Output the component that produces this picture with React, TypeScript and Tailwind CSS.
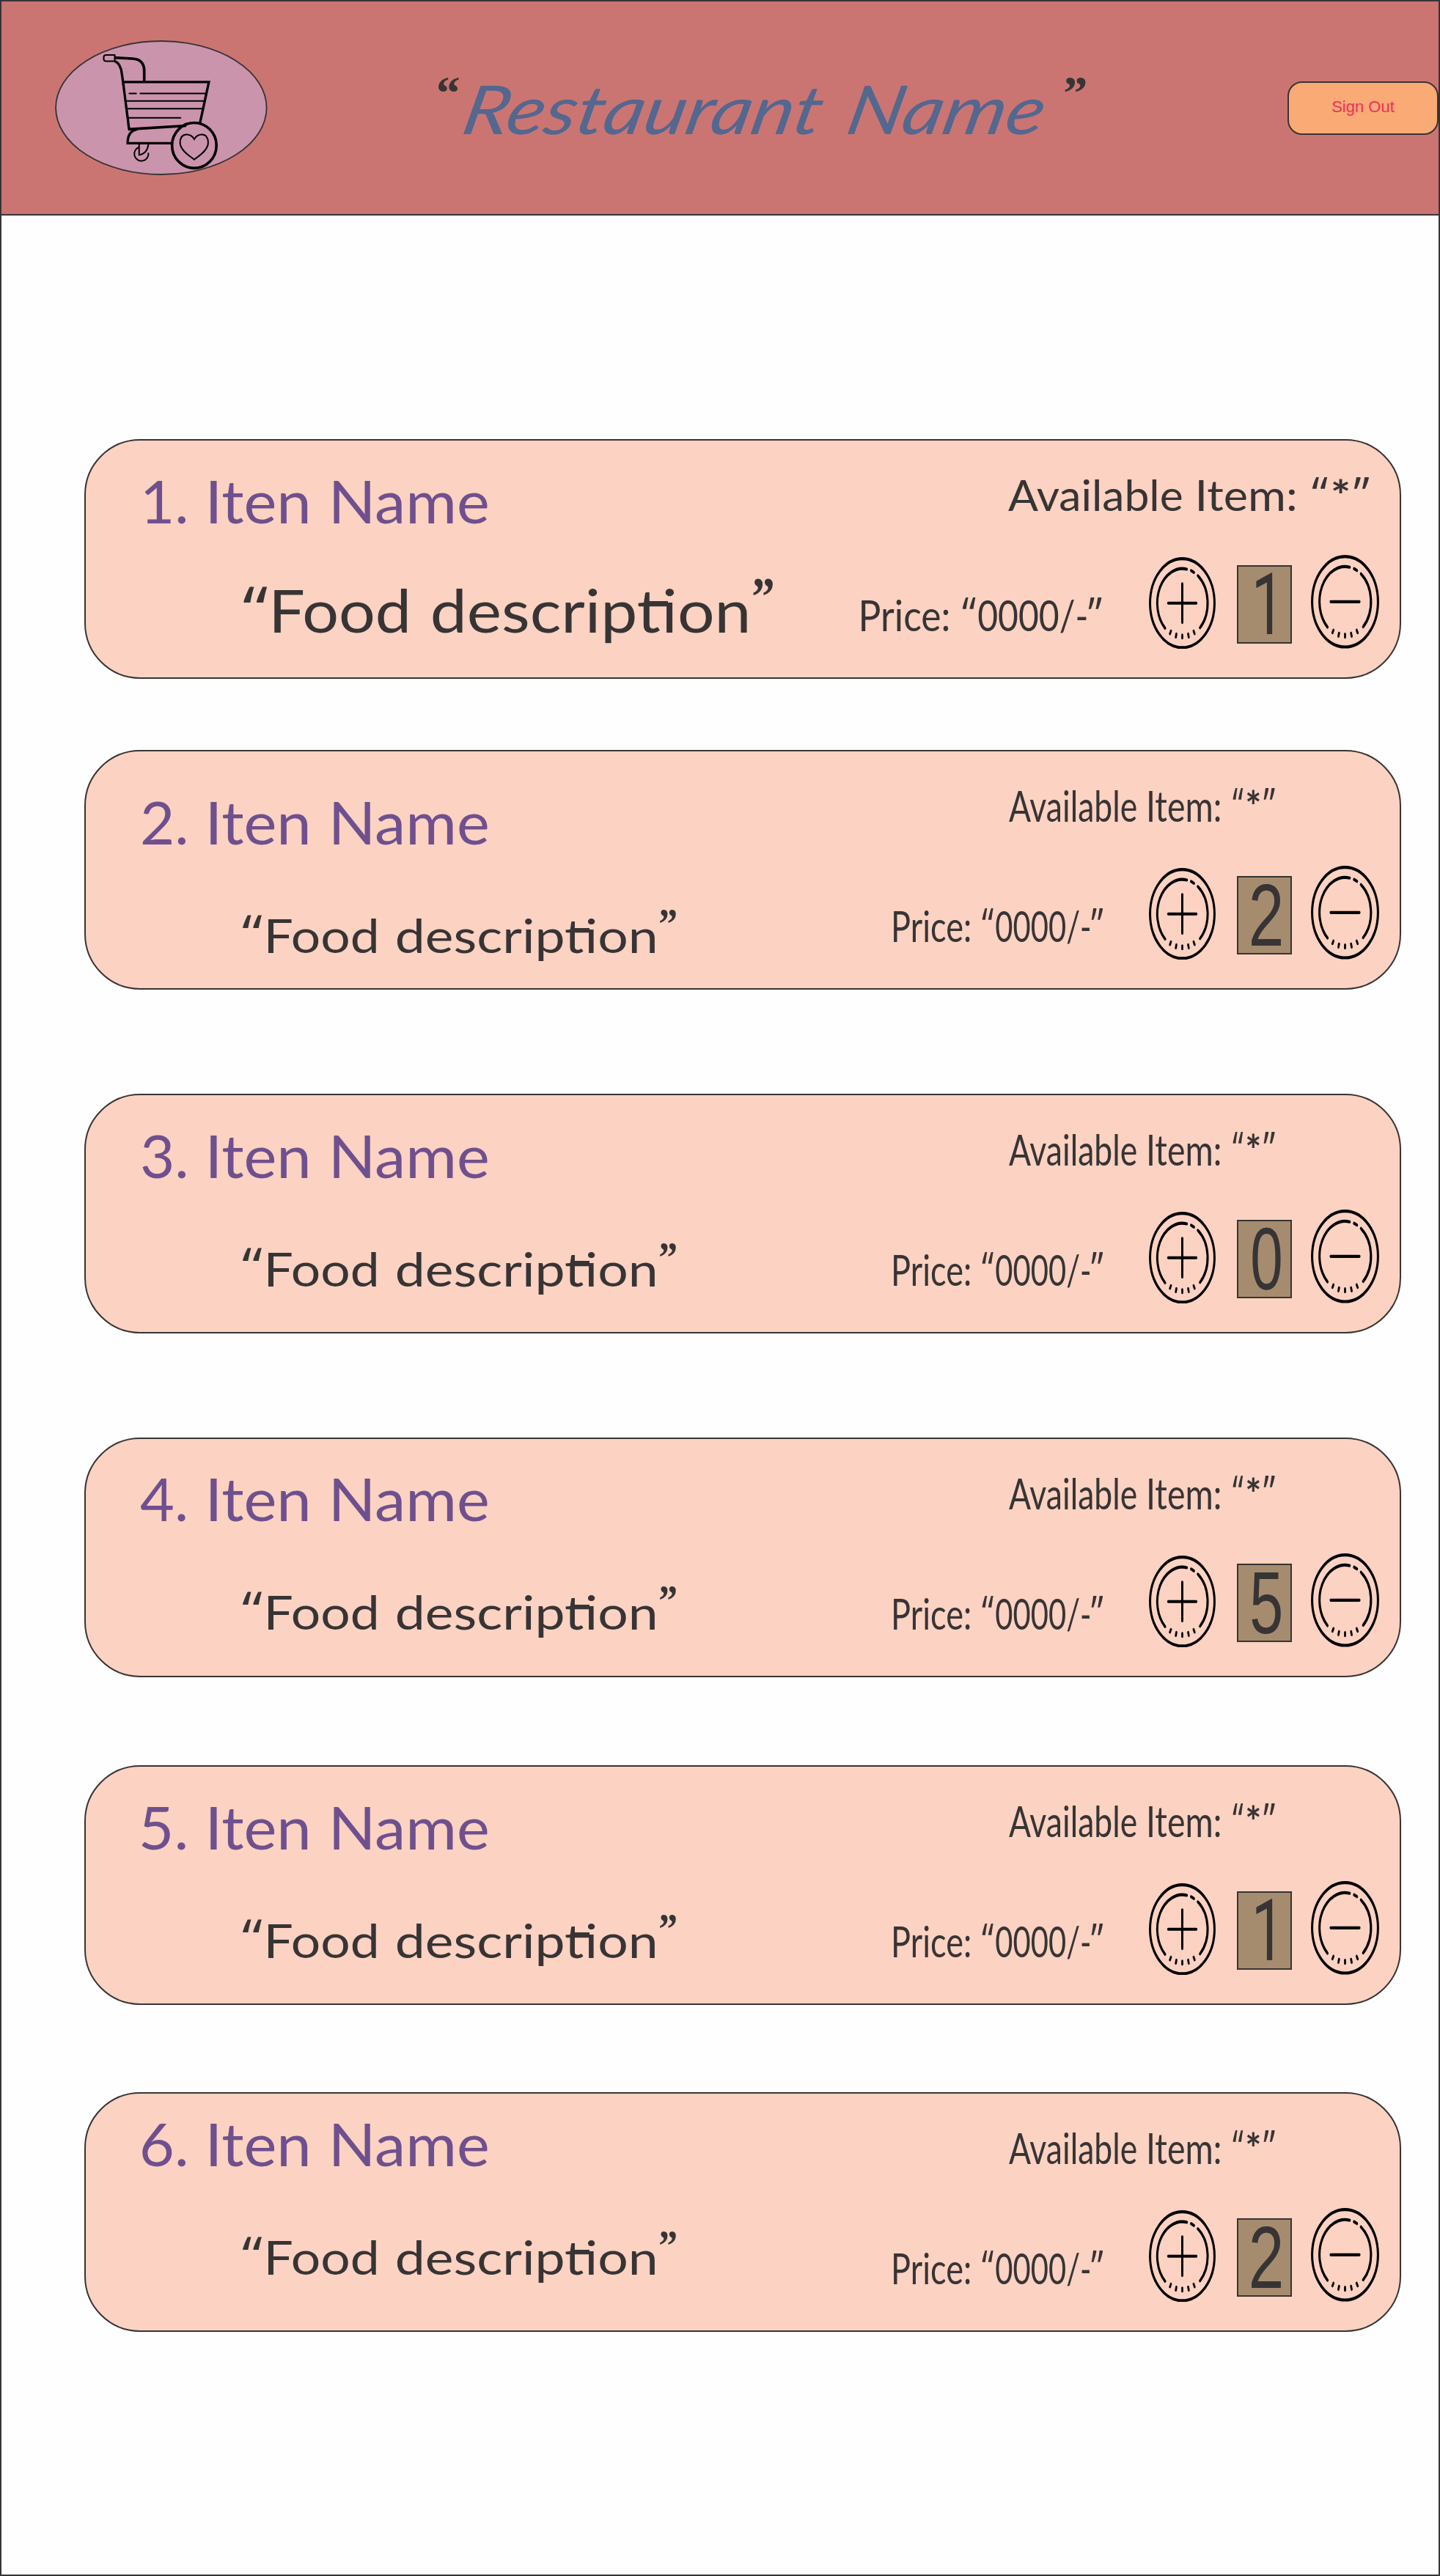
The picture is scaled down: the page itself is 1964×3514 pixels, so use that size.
import { useLayoutEffect, useRef } from "react";
import clsx from "clsx";

/** A run of text whose ink is stretched to the width of its box. */
function Fit({ text, className }: { text: string; className: string }) {
  const box = useRef<HTMLSpanElement>(null);
  const ink = useRef<HTMLSpanElement>(null);

  useLayoutEffect(() => {
    if (!box.current || !ink.current) return;
    const ctx = document.createElement("canvas").getContext("2d");
    if (!ctx) return;
    const style = getComputedStyle(ink.current);
    ctx.font = `${style.fontStyle} ${style.fontWeight} ${style.fontSize} ${style.fontFamily}`;
    const m = ctx.measureText(text);
    const left = -m.actualBoundingBoxLeft;
    const scale = parseFloat(getComputedStyle(box.current).width) / (m.actualBoundingBoxRight - left);
    ink.current.style.transform = `translateX(${-left * scale}px) scaleX(${scale})`;
  }, [text]);

  return (
    <span ref={box} className={clsx("block shrink-0 whitespace-nowrap", className)}>
      <span ref={ink} className="inline-block origin-left align-top">
        {text}
      </span>
    </span>
  );
}

function CartLogo() {
  return (
    <svg viewBox="75 75 870 553" className="mt-[53px] ml-[73px] h-[184px] w-[290px] shrink-0" fill="none" stroke="#000">
      <ellipse cx="509.500" cy="351.500" rx="432" ry="273.500" fill="#cb94ad" stroke="#373435" strokeWidth="5.500" />
      <path d="M284 135H319V161H284Q274 161 274 152V144Q274 135 284 135Z" strokeWidth="6" />
      <path d="M319 146L392 150Q440 153 440 200V243" strokeWidth="11" />
      <path d="M319 160Q344 172 348 210L353 245L378 440" strokeWidth="10" />
      <path d="M352 246H705L669 412" strokeWidth="10" />
      <path d="M379 293H407M424 293H690M367 324H686M371 355H679M376 393H589" strokeWidth="6" strokeLinecap="round" />
      <path d="M374 440L612 425" strokeWidth="11" />
      <path d="M412 440Q372 446 372 497H553" strokeWidth="10" />
      <path d="M419 502V545Q452 540 457 502" strokeWidth="6" />
      <path d="M419 513A29 29 0 1 0 457 536" strokeWidth="6" />
      <ellipse cx="645" cy="506" rx="91" ry="93" strokeWidth="11" />
      <path
        d="M645 480C632 455 587 450 587 495C587 530 638 556 645 564C652 556 702 530 702 495C702 450 658 455 645 480Z"
        strokeWidth="6"
      />
    </svg>
  );
}

function RoundButton({ kind, className }: { kind: "plus" | "minus"; className: string }) {
  return (
    <button type="button" aria-label={kind} className={clsx("block shrink-0", className)}>
      <svg
        viewBox="-50 -50 100 100"
        preserveAspectRatio="none"
        className="size-full"
        fill="none"
        stroke="#000"
        strokeWidth="3.300"
        strokeLinecap="round"
      >
        <circle r="48.300" />
        <path d="M-25.800 27.200A37.500 37.500 0 0 1 6.800 -36.900M13.300 -35.300L17.400 -33.400M23.400 -29.800A37.500 37.500 0 0 1 26.600 26.800" />
        <path
          d="M0 34.500V38M-8.800 33.500L-9.700 37M8.800 33.500L9.700 37M-17 30.300L-18.500 33.300M17 30.300L18.500 33.300"
          strokeWidth="3"
        />
        <path d="M-21 0H21" />
        {kind === "plus" && <path d="M0 -21V21" />}
      </svg>
    </button>
  );
}

const digitStyles: Record<string, string> = {
  "0": "ml-[18.7px] w-[39.3px]",
  "1": "ml-[23.7px] mt-[1.5px] w-[22.7px] font-['Roboto',sans-serif] text-[116px]",
  "2": "ml-[17.7px] w-[40px]",
  "5": "ml-[18.2px] w-[40px]",
};

type Item = {
  no: string;
  noWidth: string;
  qty: string;
  gap: string;
  pad: string;
  large?: boolean;
};

const items: Item[] = [
  { no: "1.", noWidth: "w-[56.5px]", qty: "1", gap: "mt-[305px]", pad: "pt-[42px]", large: true },
  { no: "2.", noWidth: "w-[59.5px]", qty: "2", gap: "mt-[98px]", pad: "pt-[56px]" },
  { no: "3.", noWidth: "w-[59.5px]", qty: "0", gap: "mt-[143px]", pad: "pt-[41.5px]" },
  { no: "4.", noWidth: "w-[62px]", qty: "5", gap: "mt-[143px]", pad: "pt-[41px]" },
  { no: "5.", noWidth: "w-[60px]", qty: "1", gap: "mt-[121px]", pad: "pt-[41.5px]" },
  { no: "6.", noWidth: "w-[59.5px]", qty: "2", gap: "mt-[120px]", pad: "pt-[28px]" },
];

const smallQuote = "mt-[-2.4px] font-['Open_Sans',sans-serif] text-[64px]";

function ItemCard({ item }: { item: Item }) {
  const { large } = item;
  return (
    <section
      className={clsx(
        "ml-[113px] -mb-px flex h-[327px] w-[1796px] shrink-0 rounded-[76px] border-2 border-[#373435] bg-[#fcd2c2]",
        item.gap,
      )}
    >
      <div className={clsx("w-[940px] shrink-0", item.pad)}>
        <h2 className="flex h-[80px] text-[80.5px] leading-[80px] text-[#6f508e]">
          <span className="flex w-[136px] justify-end">
            <Fit text={item.no} className={item.noWidth} />
          </span>
          <Fit text="Iten" className="ml-[34px] w-[132.5px]" />
          <Fit text="Name" className="ml-[35.5px] w-[210px]" />
        </h2>
        {large ? (
          <p className="mt-[68.7px] flex text-[80.5px] leading-[80px]">
            <Fit text="“" className="mt-[-2.9px] ml-[215px] w-[32.5px] font-['Open_Sans',sans-serif] text-[88px]" />
            <Fit text="Food" className="ml-[9.5px] w-[181.5px]" />
            <span className="relative ml-[34.5px]">
              <Fit text="description" className="w-[429px]" />
              <i className="absolute top-[28.5px] left-[290px] h-[5.5px] w-[31px] bg-[#373435]" />
            </span>
            <Fit
              text="”"
              className="mt-[-17.5px] ml-[8.3px] w-[27.7px] font-['Liberation_Serif',serif] text-[75px] font-bold"
            />
          </p>
        ) : (
          <p className="mt-[82.4px] flex text-[64.8px] leading-[64px]">
            <Fit text="“" className="mt-[-2.5px] ml-[213.2px] w-[27px] font-['Open_Sans',sans-serif] text-[71px]" />
            <Fit text="Food" className="ml-[8px] w-[148px]" />
            <span className="relative ml-[27.7px]">
              <Fit text="description" className="w-[352px]" />
              <i className="absolute top-[22.5px] left-[238px] h-[4.5px] w-[25px] bg-[#373435]" />
            </span>
            <Fit
              text="”"
              className="mt-[-15px] ml-[7.4px] w-[22.4px] font-['Liberation_Serif',serif] text-[60px] font-bold"
            />
          </p>
        )}
      </div>

      <div className="flex-1 pt-[45.3px]">
        <p className="flex h-[58px] text-[58px] leading-[58px]">
          <Fit text="Available" className={large ? "ml-[318px] w-[237px]" : "ml-[319px] w-[174px]"} />
          <Fit text="Item:" className={large ? "ml-[23px] w-[131px]" : "ml-[17px] w-[96.5px]"} />
          <Fit text="“" className={clsx(smallQuote, large ? "ml-[23px] w-[21.7px]" : "ml-[17px] w-[14.5px]")} />
          <Fit text="*" className={clsx("font-bold", large ? "ml-[6.6px] w-[22.4px]" : "ml-[5px] w-[18px]")} />
          <Fit text="”" className={clsx(smallQuote, large ? "ml-[6.8px] w-[21.5px]" : "ml-[4.5px] w-[16px]")} />
        </p>
        <div className="flex items-start">
          <p className="mt-[105.6px] flex w-[510px] shrink-0 text-[58px] leading-[58px]">
            <Fit text="Price:" className={large ? "ml-[117.6px] w-[118.4px]" : "ml-[161.5px] w-[103.5px]"} />
            <Fit text="“" className={clsx(smallQuote, large ? "ml-[19.2px] w-[18.8px]" : "ml-[17px] w-[16px]")} />
            <Fit text="0000/-" className={large ? "ml-[2.6px] w-[147.4px]" : "ml-[2.5px] w-[128px]"} />
            <Fit text="”" className={clsx(smallQuote, large ? "ml-[2.6px] w-[18.8px]" : "ml-[2.5px] w-[16.5px]")} />
          </p>
          <RoundButton kind="plus" className="mt-[55.7px] h-[125.5px] w-[91px]" />
          <output className="mt-[66.7px] ml-[29.3px] flex h-[107px] w-[75px] shrink-0 border-2 border-[#373435] bg-[#a68c6e] font-['Liberation_Sans',sans-serif] text-[120px] leading-[103px]">
            <Fit text={item.qty} className={digitStyles[item.qty]} />
          </output>
          <RoundButton kind="minus" className="mt-[53px] ml-[25.7px] h-[127.7px] w-[93px]" />
        </div>
      </div>
    </section>
  );
}

export default function App() {
  return (
    <div className="flex h-[3514px] w-[1964px] flex-col border-2 border-[#373435] bg-[#fefefe] font-['Lato',sans-serif] text-[#373435]">
      <header className="flex h-[292px] shrink-0 items-start border-b-2 border-[#373435] bg-[#cb7573]">
        <CartLogo />
        <Fit
          text="“"
          className="mt-[83.2px] ml-[232px] w-[28.7px] font-['Liberation_Serif',serif] text-[63px] leading-[84px] font-bold italic"
        />
        <h1 className="mt-[96.4px] ml-[13.3px] flex text-[92px] leading-[100px] text-[#53678f] italic">
          <Fit text="Restaurant" className="w-[482px] -skew-x-12" />
          <Fit text="Name" className="ml-[42px] w-[260px] -skew-x-12" />
        </h1>
        <Fit
          text="”"
          className="mt-[83.2px] ml-[29px] w-[29px] font-['Liberation_Serif',serif] text-[63px] leading-[84px] font-bold italic"
        />
        <button
          type="button"
          className="mt-[109px] ml-[275px] h-[73px] w-[206px] shrink-0 rounded-[20px] border-2 border-[#373435] bg-[#faaa75] pb-[5px] font-['Liberation_Sans',sans-serif] text-[22px] text-[#ee2f5b]"
        >
          Sign Out
        </button>
      </header>
      {items.map((item) => (
        <ItemCard key={item.no} item={item} />
      ))}
    </div>
  );
}
